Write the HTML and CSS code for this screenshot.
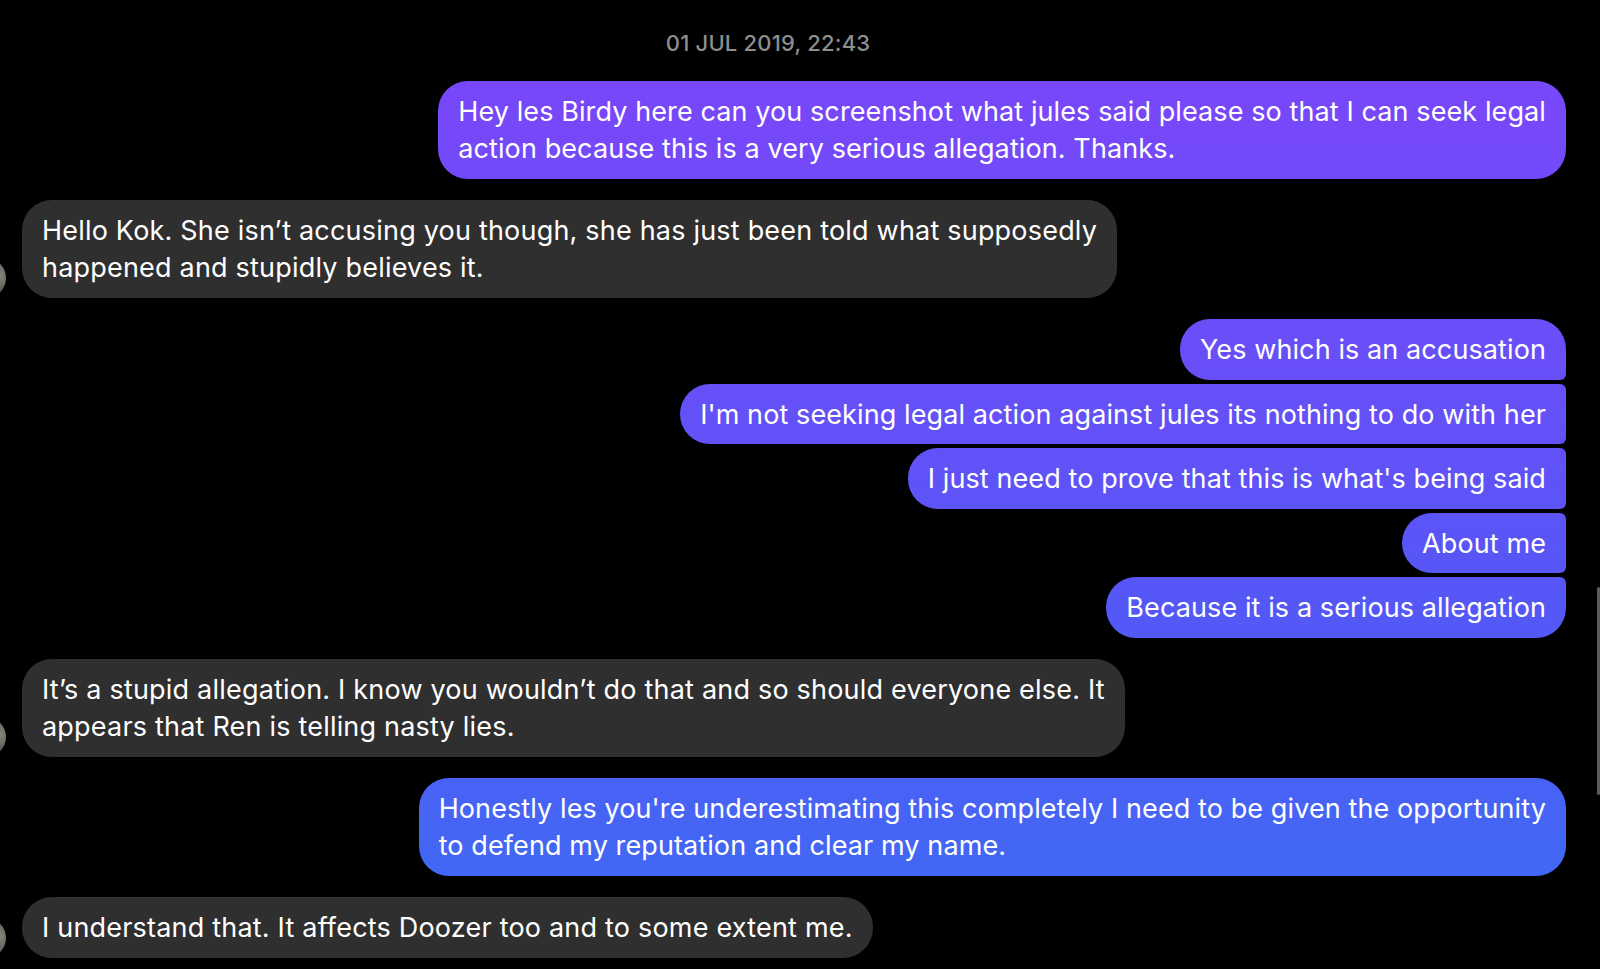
FILE: index.html
```html
<!DOCTYPE html>
<html>
<head>
<title>Chat</title>
<link rel="stylesheet" href="styles.css">
</head>
<body>

<div class="thread">
  <div class="stamp">01 JUL 2019, 22:43</div>

  <div class="group mine">
    <div class="bubble">Hey les Birdy here can you screenshot what jules said please so that I can seek legal<br>action because this is a very serious allegation. Thanks.</div>
  </div>

  <div class="group theirs">
    <div class="bubble">Hello Kok. She isn’t accusing you though, she has just been told what supposedly<br>happened and stupidly believes it.</div>
    <span class="avatar"></span>
  </div>

  <div class="group mine">
    <div class="bubble">Yes which is an accusation</div>
    <div class="bubble">I'm not seeking legal action against jules its nothing to do with her</div>
    <div class="bubble">I just need to prove that this is what's being said</div>
    <div class="bubble">About me</div>
    <div class="bubble">Because it is a serious allegation</div>
  </div>

  <div class="group theirs">
    <div class="bubble">It’s a stupid allegation. I know you wouldn’t do that and so should everyone else. It<br>appears that Ren is telling nasty lies.</div>
    <span class="avatar"></span>
  </div>

  <div class="group mine">
    <div class="bubble">Honestly les you're underestimating this completely I need to be given the opportunity<br>to defend my reputation and clear my name.</div>
  </div>

  <div class="group theirs">
    <div class="bubble">I understand that. It affects Doozer too and to some extent me.</div>
    <span class="avatar"></span>
  </div>
</div>

<div class="scrollbar"></div>

</body>
</html>
```

FILE: styles.css
```css
body { margin: 0; background-color: #000; color: #fff; font-family: 'Inter', 'Liberation Sans', sans-serif; overflow: hidden; height: 969px; }

.thread { padding: 0 34px 0 22px; display: flex; flex-direction: column; gap: 21.5px; }
.stamp { text-align: center; color: #8e8e8e; font-size: 22px; font-weight: 500; padding-top: 30px; margin-right: 52px; margin-bottom: 3.5px; letter-spacing: 0.2px; }

.group { display: flex; flex-direction: column; gap: 4px; position: relative; }
.mine { align-items: flex-end; }
.theirs { align-items: flex-start; }

.bubble { font-size: 27px; line-height: 37px; padding: 12px 20px 11.5px; border-radius: 30px; white-space: nowrap; letter-spacing: 0.1px; }
.mine .bubble {
  background: linear-gradient(180deg, #7c45fa 0%, #6a4ef8 35%, #5557f6 62%, #3b6df4 100%);
  background-attachment: fixed;
}
.theirs .bubble { background-color: #2f2f2f; letter-spacing: 0.2px; }

/* grouped corners */
.mine .bubble:not(:last-child) { border-bottom-right-radius: 6px; }
.mine .bubble:not(:first-child) { border-top-right-radius: 6px; }

.avatar { position: absolute; left: -56px; bottom: 0; width: 40px; height: 40px; border-radius: 50%; background: radial-gradient(circle at 80% 45%, #8a8a82, #4a4a46 55%, #1a1a1a 100%); }

.scrollbar { position: absolute; right: 0; top: 587px; width: 3px; height: 208px; background-color: #5a5a5a; border-radius: 2px; }
```
